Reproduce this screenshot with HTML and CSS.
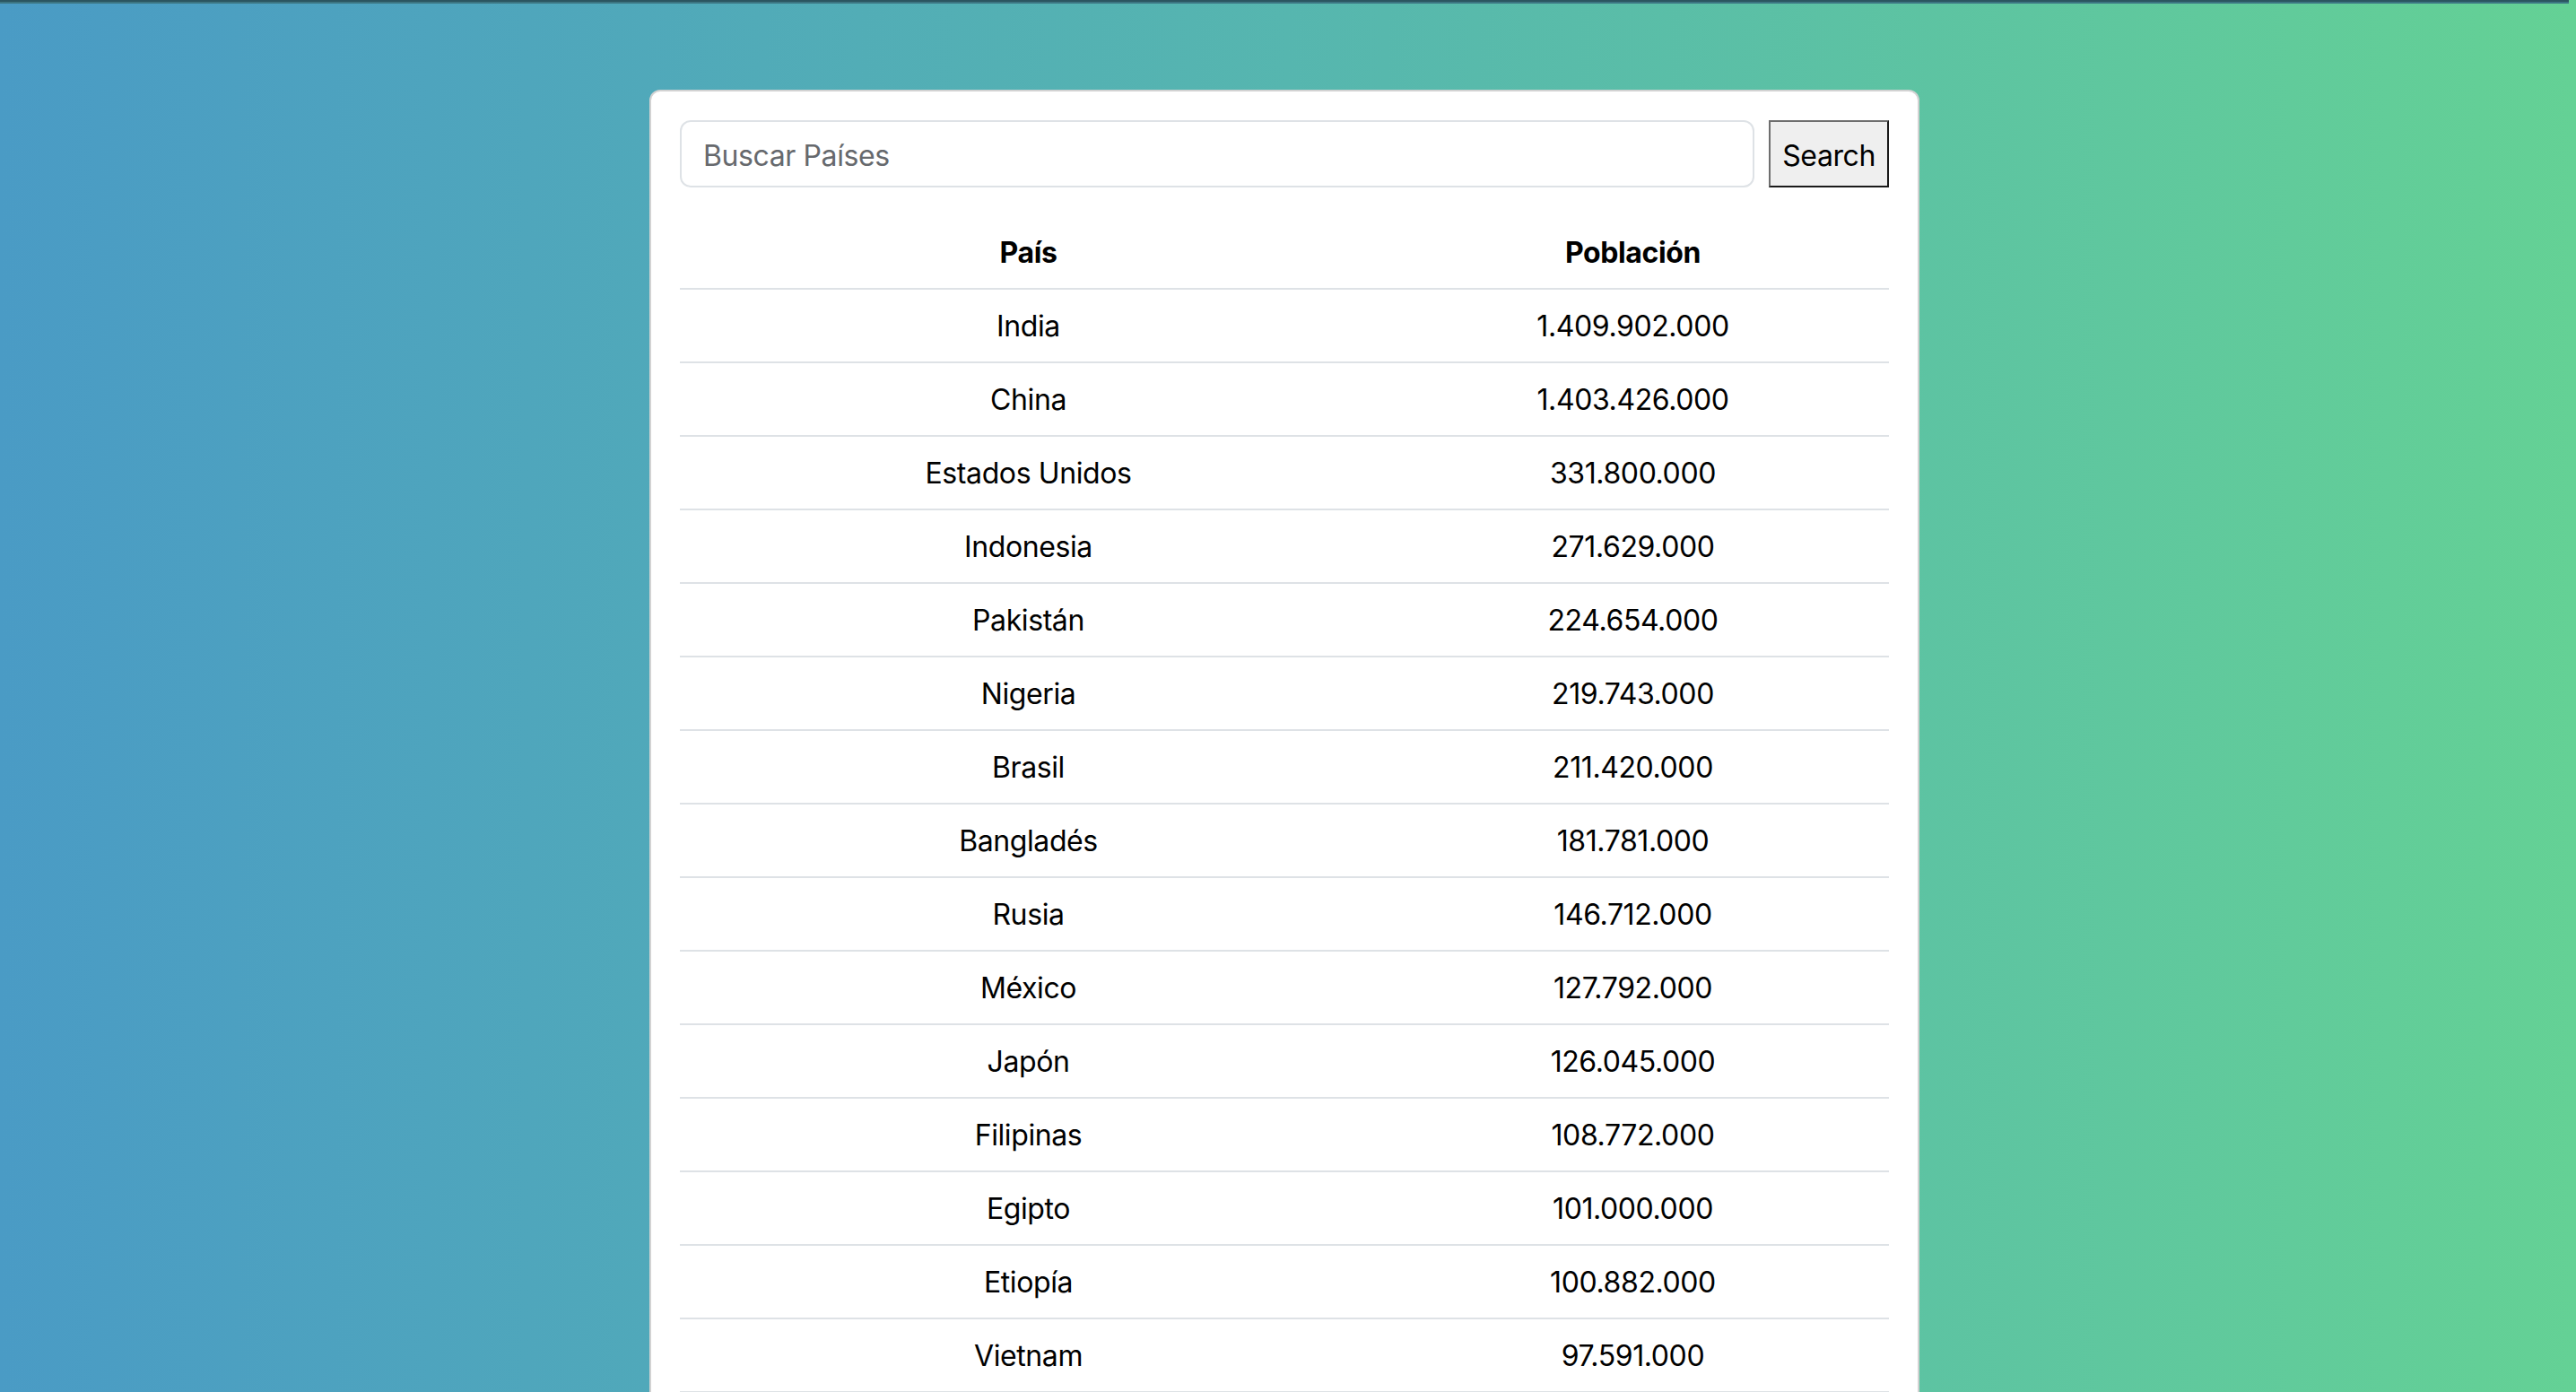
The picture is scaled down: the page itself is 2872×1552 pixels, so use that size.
FILE: index.html
```html
<!DOCTYPE html>
<html lang="es">
<head>
<meta charset="utf-8">
<title>Buscar Países</title>
<link rel="stylesheet" href="styles.css">
</head>
<body>
<div class="topbar"></div>
<main class="card">
  <form class="search">
    <input class="search-input" type="text" placeholder="Buscar Países">
    <button class="search-btn" type="button">Search</button>
  </form>
  <table class="countries">
    <colgroup><col class="col-country"><col class="col-pop"></colgroup>
    <thead>
      <tr><th>País</th><th>Población</th></tr>
    </thead>
    <tbody>
      <tr><td>India</td><td>1.409.902.000</td></tr>
      <tr><td>China</td><td>1.403.426.000</td></tr>
      <tr><td>Estados Unidos</td><td>331.800.000</td></tr>
      <tr><td>Indonesia</td><td>271.629.000</td></tr>
      <tr><td>Pakistán</td><td>224.654.000</td></tr>
      <tr><td>Nigeria</td><td>219.743.000</td></tr>
      <tr><td>Brasil</td><td>211.420.000</td></tr>
      <tr><td>Bangladés</td><td>181.781.000</td></tr>
      <tr><td>Rusia</td><td>146.712.000</td></tr>
      <tr><td>México</td><td>127.792.000</td></tr>
      <tr><td>Japón</td><td>126.045.000</td></tr>
      <tr><td>Filipinas</td><td>108.772.000</td></tr>
      <tr><td>Egipto</td><td>101.000.000</td></tr>
      <tr><td>Etiopía</td><td>100.882.000</td></tr>
      <tr><td>Vietnam</td><td>97.591.000</td></tr>
    </tbody>
  </table>
</main>
</body>
</html>
```

FILE: styles.css
```css
html, body {
  margin: 0;
  padding: 0;
  height: 100%;
  overflow: hidden;
}

body {
  background: linear-gradient(to right, #4a9bc5 0%, #56b6af 50%, #64d195 100%);
  font-family: Inter, "Noto Sans", "Liberation Sans", sans-serif;
  color: #000;
  padding-right: 8px;
  box-sizing: border-box;
}

.topbar {
  height: 4px;
  background: linear-gradient(to bottom, #2b5560 0 2px, #3c7582 2px 4px);
}

.card {
  width: 1416px;
  box-sizing: border-box;
  margin: 96px auto 0;
  background: #fff;
  border: 2px solid #d2d2d2;
  border-radius: 12px;
  padding: 32px;
}

.search {
  display: flex;
  gap: 16px;
  margin: 0;
}

.search-input {
  flex: 1;
  height: 75px;
  box-sizing: border-box;
  border: 2px solid #dee2e6;
  border-radius: 12px;
  padding: 3px 24px 0;
  font-family: inherit;
  font-size: 32px;
  letter-spacing: -0.4px;
  color: #212529;
  outline: none;
}

.search-input::placeholder {
  color: #66696d;
}

.search-btn {
  height: 75px;
  box-sizing: border-box;
  padding: 3px 13px 0;
  background: #efefef;
  border: 2px solid;
  border-color: #6e6e6e #1a1a1a #1a1a1a #6e6e6e;
  border-radius: 0;
  font-family: inherit;
  font-size: 32px;
  letter-spacing: -0.4px;
  color: #000;
}

.countries {
  width: 100%;
  margin-top: 32px;
  border-collapse: collapse;
  table-layout: fixed;
}

.col-country { width: 777px; }
.col-pop { width: 571px; }

.countries th,
.countries td {
  padding: 17px 8px 15px;
  font-size: 32px;
  line-height: 48px;
  letter-spacing: -0.4px;
  text-align: center;
  border-bottom: 2px solid #dee2e6;
}

.countries th {
  font-weight: 700;
}

.countries td {
  font-weight: 400;
}
```
